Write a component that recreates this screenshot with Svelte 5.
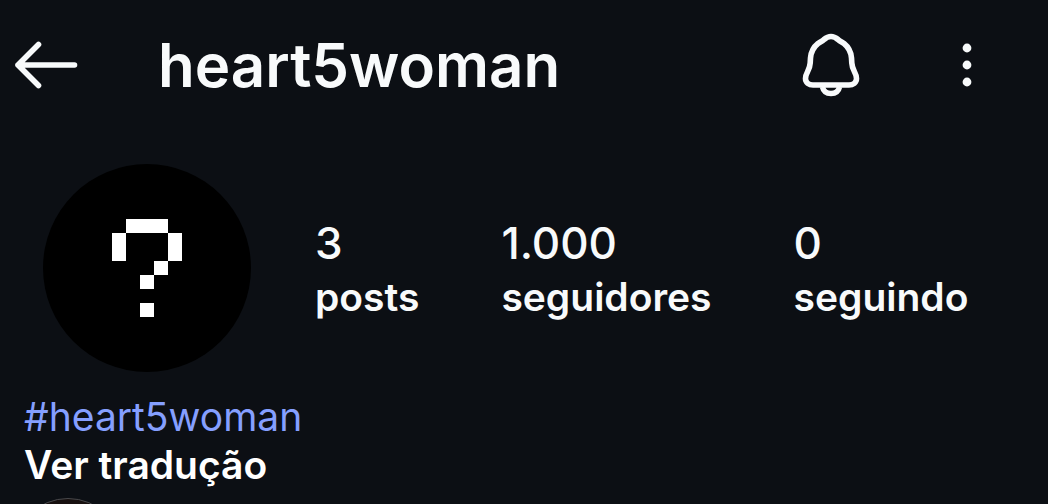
<script>
  const stats = [
    { value: '3', label: 'posts' },
    { value: '1.000', label: 'seguidores' },
    { value: '0', label: 'seguindo' }
  ];
</script>

<div class="page">
  <header>
    <button class="back" aria-label="Voltar">
      <svg width="64" height="50" viewBox="0 0 64 50" fill="none" stroke="currentColor" stroke-width="5.600" stroke-linecap="round" stroke-linejoin="round">
        <path d="M60.500 25H4M24.500 4.500L4 25L24.500 45.500" />
      </svg>
    </button>
    <h1>heart5woman</h1>
    <button aria-label="Notificações">
      <svg width="60" height="66" viewBox="0 0 60 66" fill="none" stroke="currentColor" stroke-width="5.600">
        <path stroke-linejoin="round" d="M30 4.500C33 4.500 35 5.800 37 7.500C39 9.500 41 10 43 11.500C48 15.500 50 20 50.500 26L50.800 31C51.200 39 55.500 40.500 55.500 46.500C55.500 50.500 52 53 48 53H12C8 53 4.500 50.500 4.500 46.500C4.500 40.500 8.800 39 9.200 31L9.500 26C10 20 12 15.500 17 11.500C19 10 21 9.500 23 7.500C25 5.800 27 4.500 30 4.500Z" />
        <path d="M21.500 55C22.500 59.500 25.500 61.500 30 61.500C34.500 61.500 37.500 59.500 38.500 55" />
      </svg>
    </button>
    <button class="more" aria-label="Mais opções">
      <svg width="10" height="44" viewBox="0 0 10 44" fill="currentColor">
        <circle cx="5" cy="5" r="4.400" />
        <circle cx="5" cy="22" r="4.400" />
        <circle cx="5" cy="39" r="4.400" />
      </svg>
    </button>
  </header>

  <main>
    <section class="profile">
      <div class="avatar">
        <svg width="70" height="98" viewBox="0 0 5 7" fill="#fff" shape-rendering="crispEdges" role="img" aria-label="Foto do perfil">
          <path d="M1 0h3v1H1zM0 1h1v2H0zM4 1h1v2H4zM3 3h1v1H3zM2 4h1v1H2zM2 6h1v1H2z" />
        </svg>
      </div>
      <ul class="stats">
        {#each stats as stat}
          <li><span class="value">{stat.value}</span><span class="label">{stat.label}</span></li>
        {/each}
      </ul>
    </section>

    <section class="bio">
      <a href="#heart5woman">#heart5woman</a>
      <button>Ver tradução</button>
    </section>

    <div class="highlight"></div>
  </main>
</div>

<style>
  :global(body) { background: #0c0f14; }
  .page {
    height: 100vh;
    overflow: hidden;
    background: #0c0f14;
    color: #f8fafb;
    font-family: Inter, "Liberation Sans", sans-serif;
  }
  button {
    padding: 0;
    border: 0;
    background: none;
    color: inherit;
    font: inherit;
    cursor: pointer;
  }
  svg { display: block; }
  header {
    display: flex;
    align-items: center;
    height: 130px;
    padding: 0 76px 0 14px;
  }
  h1 {
    flex: 1;
    margin: 0 0 0 80px;
    font-size: 60px;
    line-height: 72px;
    font-weight: 600;
  }
  .more { margin-left: 101px; }
  .profile {
    display: flex;
    align-items: center;
    padding: 34px 24px 0 43px;
  }
  .avatar {
    display: grid;
    place-items: center;
    flex: none;
    width: 208px;
    height: 208px;
    border-radius: 50%;
    background: #000;
  }
  .stats {
    display: flex;
    gap: 82px;
    margin: 0 0 0 64px;
    padding: 4px 0 0;
    list-style: none;
  }
  li { display: flex; flex-direction: column; }
  .value { font-size: 44px; line-height: 54px; font-weight: 500; }
  .label { font-size: 39px; line-height: 54px; font-weight: 600; }
  .bio {
    display: flex;
    flex-direction: column;
    align-items: flex-start;
    padding: 21px 24px 0;
    font-size: 39px;
    line-height: 48px;
  }
  .bio a { color: #859fff; text-decoration: none; }
  .bio button { color: #fff; font-weight: 600; }
  .highlight {
    box-sizing: border-box;
    width: 110px;
    height: 110px;
    margin: 9px 0 0 13px;
    border: 1px solid #49494c;
    border-radius: 50%;
    background: #17100f;
  }
</style>
